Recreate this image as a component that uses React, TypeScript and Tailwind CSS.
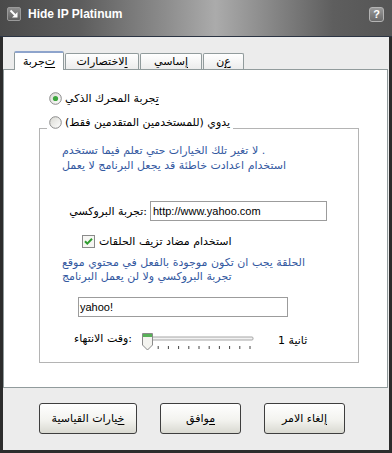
import React from "react";

const Radio = ({ checked }: { checked?: boolean }) => (
    <svg width="13" height="13" viewBox="0 0 13 13" className="shrink-0">
        <defs>
            <linearGradient id="radioFill" x1="0" y1="0" x2="1" y2="1">
                <stop offset="0" stopColor="#d8d8d2" />
                <stop offset="1" stopColor="#ffffff" />
            </linearGradient>
        </defs>
        <circle cx="6.5" cy="6.5" r="5.8" fill="url(#radioFill)" stroke="#8a8a8a" />
        {checked && <circle cx="6.5" cy="6.5" r="2.6" fill="#3da63d" />}
    </svg>
);

const Checkbox = () => (
    <svg width="13" height="13" viewBox="0 0 13 13" className="shrink-0">
        <rect x="0.5" y="0.5" width="12" height="12" fill="#f6f6f3" stroke="#8a8a8a" />
        <path d="M3 6.2 L5.3 8.6 L10 3.8" fill="none" stroke="#2f9c2f" strokeWidth="2" />
    </svg>
);

const Slider = () => {
    const ticks = Array.from({ length: 11 }, (_, i) => 7 + i * 10.2);
    return (
        <svg width="115" height="18" viewBox="0 0 115 18">
            <rect x="4" y="4" width="108" height="3" rx="1" fill="#f2f2f2" stroke="#a6a6a6" />
            {ticks.map((x) => (
                <line key={x} x1={x} y1="13" x2={x} y2="16" stroke="#444" strokeWidth="1" />
            ))}
            <path d="M1.5 0.5 H11.5 V12 L6.5 17 L1.5 12 Z" fill="#f4f4f0" stroke="#8a8a8a" />
            <rect x="2" y="1" width="9" height="3" fill="#58b158" />
        </svg>
    );
};

// first letter underlined (windows mnemonic)
const Mn = ({ c, rest }: { c: string; rest: string }) => (
    <>
        <span className="underline underline-offset-2">{c}</span>
        {rest}
    </>
);

const Tab = ({ active, width, children }: { active?: boolean; width: string; children: React.ReactNode }) =>
    active ? (
        <div
            className={`${width} h-[19px] -mb-px relative z-10 bg-white border border-b-0 border-[#919b9c] border-t-2 border-t-[#8ea4cc] flex items-center justify-center rounded-t-[2px]`}
            dir="rtl"
        >
            {children}
        </div>
    ) : (
        <div
            className={`${width} h-[16px] border border-b-0 border-[#919b9c] bg-[linear-gradient(#ffffff,#ececec)] flex items-center justify-center rounded-t-[2px]`}
            dir="rtl"
        >
            {children}
        </div>
    );

const WinButton = ({ width, children }: { width: string; children: React.ReactNode }) => (
    <button
        className={`${width} h-[31px] rounded-[3px] border border-[#3e3e3e] bg-[linear-gradient(#ffffff,#f3f3ef_55%,#d9d9d1)] text-[11px] text-black`}
        dir="rtl"
    >
        {children}
    </button>
);

const App = () => {
    const blue = "text-[#33589f]";

    return (
        <div className="w-[392px] h-[453px] flex flex-col bg-[#ececec] font-['DejaVu_Sans',sans-serif] text-[11px] text-black leading-[13px]">
            {/* title bar */}
            <div className="h-[37px] shrink-0 flex items-start px-[7px] pt-[7px] border-b border-[#2b3443] bg-[linear-gradient(90deg,#4a4a4a_0%,#5c5c5c_20%,#8c8c8c_42%,#ababab_55%,#8a8a8a_68%,#5e5e5e_85%,#555555_100%)]">
                <div className="w-[14px] h-[14px] rounded-[2px] border border-[#9a9a9a] bg-[linear-gradient(#8e8e8e,#5f5f5f)] flex items-center justify-center">
                    <svg width="10" height="10" viewBox="0 0 10 10">
                        <path d="M1.5 1.5 L6 6" stroke="#fff" strokeWidth="2" />
                        <path d="M3 8.5 H8.5 V3 Z" fill="#fff" />
                    </svg>
                </div>
                <div className="ml-[7px] mt-px text-white font-bold text-[12px] font-['Liberation_Sans',sans-serif]">
                    Hide IP Platinum
                </div>
                <div className="ml-auto mr-[1px] w-[15px] h-[15px] rounded-[3px] border border-[#b4b4b4] bg-[linear-gradient(#9a9a9a,#6a6a6a)] flex items-center justify-center text-white font-bold text-[11px] font-['Liberation_Sans',sans-serif]">
                    ?
                </div>
            </div>

            {/* body */}
            <div className="flex-1 flex flex-col border-x-[3px] border-b-[3px] border-[#2c2c2c]">
                <div className="h-[32px] shrink-0 flex items-end pl-[11px] gap-px">
                    <Tab active width="w-[50px]">
                        <Mn c="ت" rest="جربة" />
                    </Tab>
                    <Tab width="w-[74px]">
                        <Mn c="ا" rest="لاختصارات" />
                    </Tab>
                    <Tab width="w-[62px]">
                        <Mn c="إ" rest="ساسي" />
                    </Tab>
                    <Tab width="w-[41px]">
                        <Mn c="ع" rest="ن" />
                    </Tab>
                </div>

                <div className="h-[319px] shrink-0 mr-px bg-white border border-[#919b9c] flex flex-col pt-[22px]">
                    <div className="flex items-center gap-[3px] h-[13px] pl-[45px]">
                        <Radio checked />
                        <span dir="rtl">
                            <Mn c="ت" rest="جربة المحرك الذكي" />
                        </span>
                    </div>

                    {/* group box */}
                    <div className="mt-[11px] ml-[35px] w-[320px] flex flex-col">
                        <div className="flex h-[13px] items-center">
                            <div className="w-[8px] h-px self-end bg-[#b4b4b4]" />
                            <div className="ml-[2px] flex items-center gap-[3px]">
                                <Radio />
                                <span dir="rtl">يدوي (للمستخدمين المتقدمين فقط)</span>
                            </div>
                            <div className="flex-1 ml-[3px] h-px self-end bg-[#b4b4b4]" />
                        </div>

                        <div className="border-x border-b border-[#b4b4b4] pt-[14px] pl-[22px] pb-[11px] flex flex-col">
                            <div className={`${blue} leading-[15px] flex flex-col items-start`}>
                                <div>لا تغير تلك الخيارات حتي تعلم فيما تستخدم .</div>
                                <div>استخدام اعدادت خاطئة قد يجعل البرنامج لا يعمل</div>
                            </div>

                            <div className="mt-[28px] h-[20px] flex items-center">
                                <div className="w-[85px] text-right">تجربة البروكسي:</div>
                                <div className="ml-[3px] w-[177px] h-[20px] border border-[#9c9c9c] bg-white flex items-center pl-[2px] font-['Liberation_Sans',sans-serif] text-[11px]">
                                    http://www.yahoo.com
                                </div>
                            </div>

                            <div className="mt-[14px] h-[13px] flex items-center gap-[4px] ml-[20px]">
                                <Checkbox />
                                <span dir="rtl">استخدام مضاد تزيف الحلقات</span>
                            </div>

                            <div className={`${blue} mt-[8px] leading-[14px] flex flex-col items-start`}>
                                <div>الحلقة يجب ان تكون موجودة بالفعل في محتوي موقع</div>
                                <div>تجربة البروكسي ولا لن يعمل البرنامج</div>
                            </div>

                            <div className="mt-[13px] ml-[16px] w-[210px] h-[20px] border border-[#9c9c9c] bg-white flex items-center pl-px font-['Liberation_Sans',sans-serif] text-[11px]">
                                yahoo!
                            </div>

                            <div className="mt-[16px] h-[18px] flex items-start">
                                <div className="w-[70px] text-right mt-[-1px]">وقت الانتهاء:</div>
                                <div className="ml-[9px]">
                                    <Slider />
                                </div>
                                <div className="ml-[22px] mt-px">1 ثانية</div>
                            </div>
                        </div>
                    </div>
                </div>

                <div className="flex-1 flex items-start pt-[15px] pl-[36px] gap-[23px]">
                    <WinButton width="w-[98px]">
                        <Mn c="خ" rest="يارات القياسية" />
                    </WinButton>
                    <WinButton width="w-[81px]">
                        <Mn c="م" rest="وافق" />
                    </WinButton>
                    <WinButton width="w-[81px]">
                        <Mn c="إ" rest="لغاء الامر" />
                    </WinButton>
                </div>
            </div>
        </div>
    );
};

export default App;
